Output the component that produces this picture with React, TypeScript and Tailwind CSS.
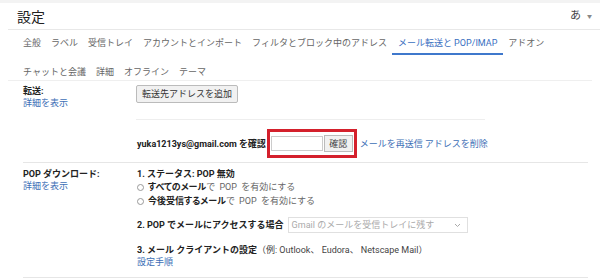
import React from "react";

const tabs1 = [
  "全般",
  "ラベル",
  "受信トレイ",
  "アカウントとインポート",
  "フィルタとブロック中のアドレス",
];
const tabs2 = ["チャットと会議", "詳細", "オフライン", "テーマ"];

function Radio({ bold, rest }: { bold: string; rest: string }) {
  return (
    <div className="flex items-center h-[14px]">
      <span className="w-[7px] h-[7px] rounded-full border border-[#999] ml-[1px]" />
      <span className="ml-[4px] font-bold text-[#222] [font-feature-settings:'palt']">{bold}</span>
      <span className="text-[#666] [word-spacing:2px]">{rest}</span>
    </div>
  );
}

export default function App() {
  return (
    <div className="w-[600px] h-[278px] overflow-hidden bg-white text-[9px] leading-[12px] text-[#222] font-['Roboto','Noto_Sans_CJK_JP',sans-serif]">
      <div className="h-[3px] bg-[#f3f3f3]" />
      <div className="h-[27px] ml-2 border-b border-[#e8e8e8] flex items-center justify-between pl-[9px] pr-[8px]">
        <span className="text-[14px] leading-[16px] text-[#222] mt-[1px]">設定</span>
        <span className="flex items-center gap-[6px] text-[#444]">
          <span className="text-[11px]">あ</span>
          <span className="text-[5px] text-[#888]">▼</span>
        </span>
      </div>
      <div className="flex h-[25px] pl-[18px] text-[#666]">
        {tabs1.map((t) => (
          <div key={t} className="h-full flex items-center px-[5px]">
            {t}
          </div>
        ))}
        <div className="h-full flex items-center px-[6px] border-b-2 border-[#3f78cc] text-[#3a6fbf] pt-[2px]">
          メール転送と POP/IMAP
        </div>
        <div className="h-full flex items-center px-[5px]">アドオン</div>
      </div>
      <div className="flex h-[26px] pt-[8px] items-center pl-[10px] text-[#666] mx-2 border-b border-[#efefef]">
        {tabs2.map((t) => (
          <div key={t} className="px-[5px]">
            {t}
          </div>
        ))}
      </div>

      <div className="ml-[23px] mr-[12px] flex border-b border-[#e6e6e6] pt-[4px] pb-[4px]">
        <div className="w-[113px] shrink-0">
          <div className="font-bold">転送:</div>
          <div className="text-[#3d6fb6]">詳細を表示</div>
        </div>
        <div className="flex-1">
          <div className="inline-flex items-center h-[18px] px-[5px] border border-[#bbb] bg-[#f1f1f1] text-[#333] rounded-[2px]">
            転送先アドレスを追加
          </div>
          <div className="mt-[16px] w-[349px] border-t border-[#eeeeee]" />
          <div className="mt-[9px] flex items-center">
            <span className="font-bold ml-[1px] [font-feature-settings:'palt']">yuka1213ys@gmail.com を確認</span>
            <div className="ml-[1px] h-[29px] border-[3px] border-[#d4202c] flex items-center pl-[1px] pr-[1px] gap-[1px]">
              <div className="w-[52px] h-[15px] border border-[#ccc] bg-white" />
              <div className="h-[17px] w-[29px] flex items-center justify-center border border-[#bbb] bg-[#f1f1f1] text-[#444]">
                確認
              </div>
            </div>
            <span className="ml-[3px] text-[#3d6fb6]">メールを再送信 アドレスを削除</span>
          </div>
        </div>
      </div>

      <div className="ml-[23px] mr-[12px] flex border-b border-[#e6e6e6] pt-[5px] pb-[9px]">
        <div className="w-[113px] shrink-0">
          <div className="font-bold">POP ダウンロード:</div>
          <div className="text-[#3d6fb6]">詳細を表示</div>
        </div>
        <div className="flex-1">
          <div className="font-bold ml-[1px]">1. ステータス: POP 無効</div>
          <Radio bold="すべてのメール" rest="で POP を有効にする" />
          <Radio bold="今後受信するメール" rest="で POP を有効にする" />
          <div className="mt-[9px] flex items-center h-[16px] ml-[1px]">
            <span className="font-bold">2. POP でメールにアクセスする場合</span>
            <div className="ml-[4px] w-[180px] h-[16px] border border-[#e0e0e0] flex items-center justify-between pl-[3px] pr-[6px] text-[#aaa]">
              <span>Gmail のメールを受信トレイに残す</span>
              <svg width="7" height="5" viewBox="0 0 7 5">
                <path d="M1 1l2.5 2.5L6 1" fill="none" stroke="#aaa" strokeWidth="1" />
              </svg>
            </div>
          </div>
          <div className="mt-[11px] ml-[1px]">
            <span className="font-bold">3. メール クライアントの設定</span>
            <span className="text-[#444]">（例: Outlook、 Eudora、 Netscape Mail）</span>
          </div>
          <div className="ml-[1px] text-[#3d6fb6]">設定手順</div>
        </div>
      </div>
    </div>
  );
}
